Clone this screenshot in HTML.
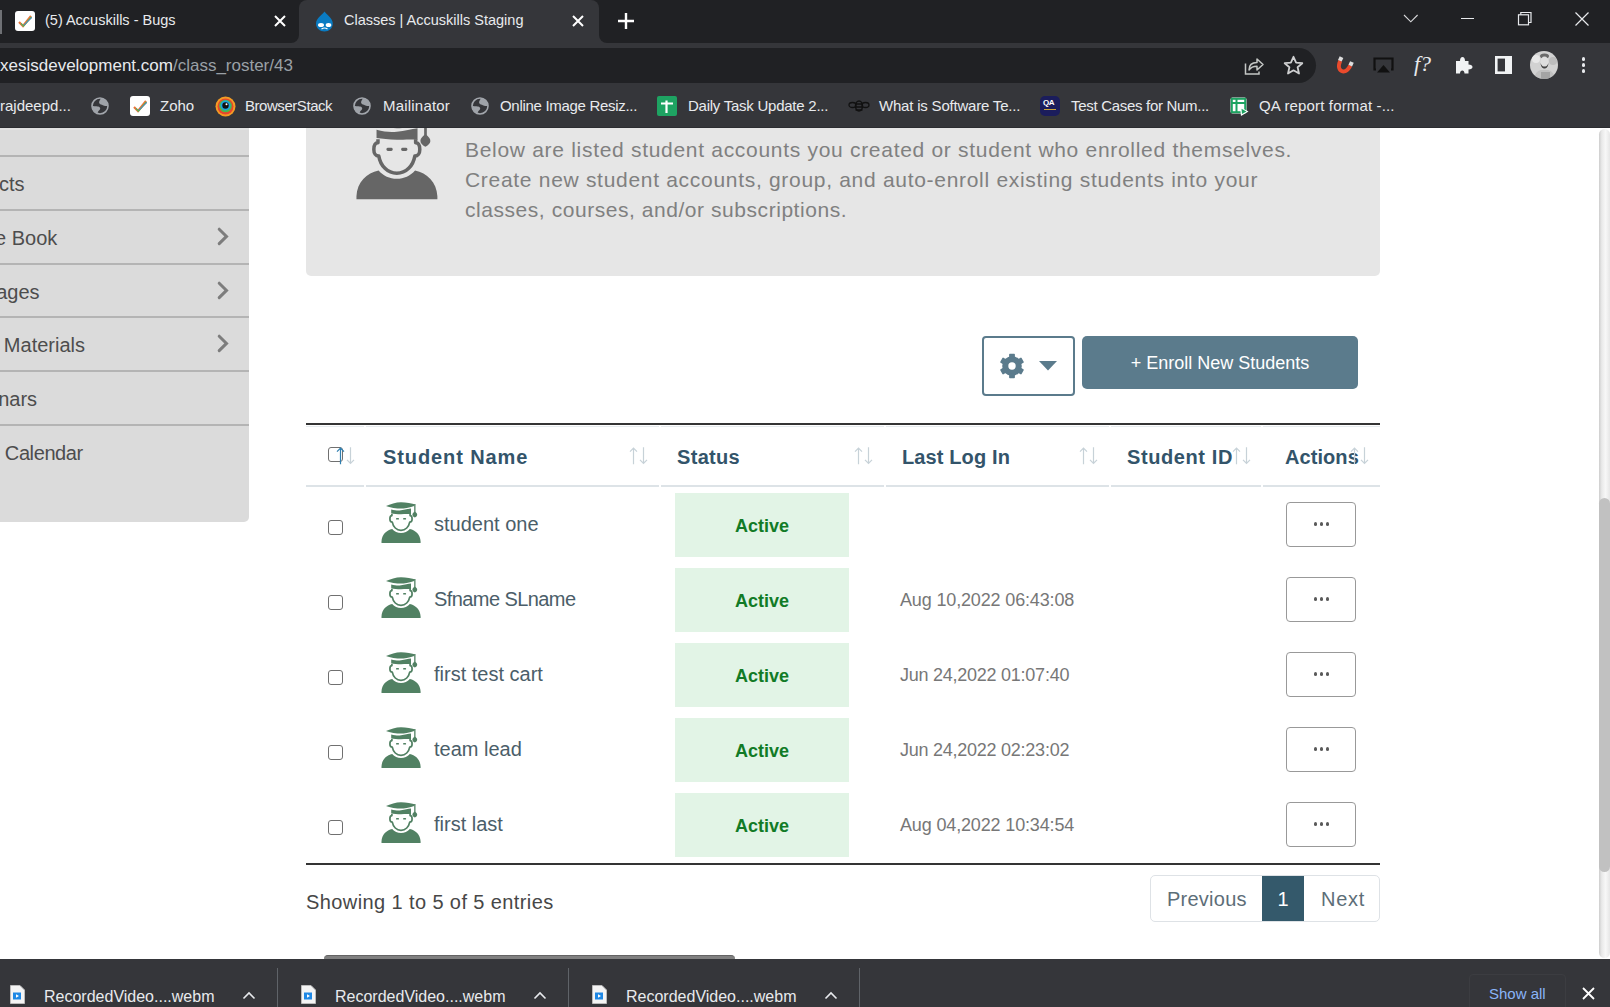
<!DOCTYPE html>
<html><head><meta charset="utf-8">
<style>
*{box-sizing:border-box;margin:0;padding:0}
html,body{width:1610px;height:1007px;overflow:hidden;background:#fff;font-family:"Liberation Sans",sans-serif}
.a{position:absolute}
.t{position:absolute;white-space:nowrap;line-height:1}
#strip{left:0;top:0;width:1610px;height:43px;background:#202124}
#toolbar{left:0;top:43px;width:1610px;height:85px;background:#35363a}
#acttab{left:299px;top:0;width:300px;height:43px;background:#35363a;border-radius:8px 8px 0 0}
#flareL{left:291px;top:35px;width:8px;height:8px;background:#35363a}
#flareL:after{content:"";position:absolute;left:0;top:0;width:8px;height:8px;background:#202124;border-radius:0 0 8px 0}
#flareR{left:599px;top:35px;width:8px;height:8px;background:#35363a}
#flareR:after{content:"";position:absolute;left:0;top:0;width:8px;height:8px;background:#202124;border-radius:0 0 0 8px}
#omni{left:-20px;top:48px;width:1336px;height:35px;background:#202124;border-radius:18px}
.tabt{font-size:14.5px;color:#e8eaed;top:13px}
.bm{font-size:15px;color:#e8eaed;top:98px}
#page{left:0;top:128px;width:1610px;height:831px;background:#fff;overflow:hidden}
#dl{left:0;top:959px;width:1610px;height:48px;background:#35363a}
/* PAGECSS */
.side{font-size:20px;color:#4d4d4d}
.info{font-size:21px;color:#808080;letter-spacing:0.7px}
.th{font-size:20px;font-weight:bold;color:#33546a}
.nm{font-size:20px;color:#4b5e69}
.act{font-size:18px;font-weight:bold;color:#117b26}
.dt{font-size:18px;color:#777;letter-spacing:-0.15px}
.pg{font-size:20px;color:#5d6e78}
.cb{width:15px;height:15px;border:1.5px solid #707070;border-radius:3px;background:#fff}
.dlt{font-size:16px;color:#e8eaed;top:989px}
/* ENDPAGECSS */
</style></head><body>
<!-- PAGE START -->
<div class="a" style="left:0;top:128px;width:249px;height:394px;background:#dbdbdb;border-radius:0 0 5px 0"></div>
<div class="a" style="left:0;top:128px;width:249px;height:2px;background:#e2e2e2"></div>
<div class="a" style="left:0;top:155px;width:249px;height:2px;background:#b4b4b4"></div>
<div class="a" style="left:0;top:209px;width:249px;height:2px;background:#b4b4b4"></div>
<div class="a" style="left:0;top:263px;width:249px;height:2px;background:#b4b4b4"></div>
<div class="a" style="left:0;top:316px;width:249px;height:2px;background:#b4b4b4"></div>
<div class="a" style="left:0;top:370px;width:249px;height:2px;background:#b4b4b4"></div>
<div class="a" style="left:0;top:424px;width:249px;height:2px;background:#b4b4b4"></div>
<div class="t side" style="right:1585.4px;top:174px;letter-spacing:0px">cts</div>
<div class="t side" style="right:1552.7px;top:228px;letter-spacing:0px">e Book</div>
<div class="t side" style="right:1570.4px;top:282px;letter-spacing:0px">ages</div>
<div class="t side" style="right:1525px;top:335px;letter-spacing:0px">Materials</div>
<div class="t side" style="right:1572.9px;top:389px;letter-spacing:0px">nars</div>
<div class="t side" style="right:1527.2px;top:443px;letter-spacing:-0.4px">Calendar</div>
<svg class="a" style="left:216px;top:226.5px" width="14" height="20" viewBox="0 0 14 20"><path d="M3.2,2.2 L10.5,9.4 L3.2,16.6" fill="none" stroke="#7d7d7d" stroke-width="3" stroke-linecap="round" stroke-linejoin="miter"/></svg>
<svg class="a" style="left:216px;top:280.5px" width="14" height="20" viewBox="0 0 14 20"><path d="M3.2,2.2 L10.5,9.4 L3.2,16.6" fill="none" stroke="#7d7d7d" stroke-width="3" stroke-linecap="round" stroke-linejoin="miter"/></svg>
<svg class="a" style="left:216px;top:334px" width="14" height="20" viewBox="0 0 14 20"><path d="M3.2,2.2 L10.5,9.4 L3.2,16.6" fill="none" stroke="#7d7d7d" stroke-width="3" stroke-linecap="round" stroke-linejoin="miter"/></svg>
<div class="a" style="left:306px;top:100px;width:1074px;height:176px;background:#e6e6e6;border-radius:5px"></div>
<svg class="a" style="left:343.4px;top:100.3px;overflow:visible" width="113.85" height="113.85" viewBox="0 0 55 55"><g fill="#666666"><path d="M6.5,48 L6.5,46.5 C6.8,39.5 11.5,35.2 17.2,34 C19.5,36.6 22.5,38 26,38 C29.5,38 32.5,36.6 34.8,34 C40.5,35.2 45.3,39.5 45.6,46.5 L45.6,48Z"/><path d="M11,11 C15,9.2 21,7.2 26,7.2 C31,7.2 37,8.6 40.7,9.5 L38.5,11.2 C34,12.8 29,13.6 26,13.6 C22,13.6 14.5,12.6 11,11Z"/><path d="M16.2,14.4 C20,15.3 23,15.8 26,15.3 C30,14.8 33,14 36,13.6 L36,19.2 C32,18.9 29,19.2 26,19.2 C22,19.1 19,18.7 16.2,18.4Z"/><rect x="39.2" y="9.3" width="1.3" height="8.5"/><path d="M39.8,16.6 C41.2,17.6 42.2,18.6 42.2,19.8 C42.2,21 41,22 39.8,22.6 C38.6,22 37.4,21 37.4,19.8 C37.4,18.6 38.4,17.6 39.8,16.6Z"/><rect x="21" y="23.1" width="3" height="1.5" rx="0.7"/><rect x="28.1" y="23.1" width="3" height="1.5" rx="0.7"/></g><path d="M16.9,19 L16.9,20.6 C15.6,20.6 14.9,22 14.9,23.9 C14.9,25.8 15.8,27.1 17.3,27.1 C18.1,31.8 21.5,35.4 26,35.4 C30.5,35.4 33.9,31.8 34.7,27.1 C36.2,27.1 37.1,25.8 37.1,23.9 C37.1,22 36.4,20.6 35.1,20.6 L35.1,19" fill="none" stroke="#666666" stroke-width="1.7" stroke-linejoin="round"/></svg>
<div class="t info" style="left:465px;top:139px">Below are listed student accounts you created or student who enrolled themselves.</div>
<div class="t info" style="left:465px;top:169px">Create new student accounts, group, and auto-enroll existing students into your</div>
<div class="t info" style="left:465px;top:199px;letter-spacing:0.55px">classes, courses, and/or subscriptions.</div>
<div class="a" style="left:982px;top:336px;width:93px;height:60px;border:2px solid #5b7b8c;border-radius:4px"></div>
<svg class="a" style="left:998.8px;top:352.6px" width="26" height="26" viewBox="-13 -13 26 26"><g fill="#5b7b8c"><circle r="9.8"/><rect x="-2.9" y="-12.3" width="5.8" height="5" rx="0.8" transform="rotate(0)"/><rect x="-2.9" y="-12.3" width="5.8" height="5" rx="0.8" transform="rotate(60)"/><rect x="-2.9" y="-12.3" width="5.8" height="5" rx="0.8" transform="rotate(120)"/><rect x="-2.9" y="-12.3" width="5.8" height="5" rx="0.8" transform="rotate(180)"/><rect x="-2.9" y="-12.3" width="5.8" height="5" rx="0.8" transform="rotate(240)"/><rect x="-2.9" y="-12.3" width="5.8" height="5" rx="0.8" transform="rotate(300)"/></g><circle r="3.7" fill="#fff"/></svg>
<svg class="a" style="left:1039px;top:361px" width="18" height="10" viewBox="0 0 18 10"><path d="M0,0 H18 L9,9.5Z" fill="#5b7b8c"/></svg>
<div class="a" style="left:1082px;top:336px;width:276px;height:53px;background:#5b7b8c;border-radius:5px"></div>
<div class="t" style="left:1082px;top:354px;width:276px;text-align:center;font-size:18px;color:#fff">+ Enroll New Students</div>
<div class="a" style="left:306px;top:423px;width:1074px;height:2px;background:#343434"></div>
<div class="a" style="left:306px;top:426px;width:58px;height:1px;background:#e6ebee"></div>
<div class="a" style="left:306px;top:485px;width:58px;height:2px;background:#dde3e7"></div>
<div class="a" style="left:366px;top:426px;width:293px;height:1px;background:#e6ebee"></div>
<div class="a" style="left:366px;top:485px;width:293px;height:2px;background:#dde3e7"></div>
<div class="a" style="left:661px;top:426px;width:223px;height:1px;background:#e6ebee"></div>
<div class="a" style="left:661px;top:485px;width:223px;height:2px;background:#dde3e7"></div>
<div class="a" style="left:886px;top:426px;width:223px;height:1px;background:#e6ebee"></div>
<div class="a" style="left:886px;top:485px;width:223px;height:2px;background:#dde3e7"></div>
<div class="a" style="left:1111px;top:426px;width:150px;height:1px;background:#e6ebee"></div>
<div class="a" style="left:1111px;top:485px;width:150px;height:2px;background:#dde3e7"></div>
<div class="a" style="left:1263px;top:426px;width:117px;height:1px;background:#e6ebee"></div>
<div class="a" style="left:1263px;top:485px;width:117px;height:2px;background:#dde3e7"></div>
<div class="a cb" style="left:328px;top:447px"></div>
<div class="t th" style="left:383px;top:447px;letter-spacing:0.9px">Student Name</div>
<div class="t th" style="left:677px;top:447px;letter-spacing:0.32px">Status</div>
<div class="t th" style="left:902px;top:447px;letter-spacing:0.12px">Last Log In</div>
<div class="t th" style="left:1127px;top:447px;letter-spacing:0.6px">Student ID</div>
<div class="t th" style="left:1285px;top:447px;letter-spacing:0.07px">Actions</div>
<svg class="a" style="left:336.5px;top:446px;overflow:visible" width="19" height="19" viewBox="0 0 19 19"><path d="M3.5,18.2 V2.1 M0,5.6 L3.5,2.1 L7,5.6" fill="none" stroke="#2f7fb0" stroke-width="1.2"/><path d="M13.5,1.2 V17.3 M10,13.8 L13.5,17.3 L17,13.8" fill="none" stroke="#c7d2d8" stroke-width="1.2"/></svg>
<svg class="a" style="left:630px;top:446px;overflow:visible" width="19" height="19" viewBox="0 0 19 19"><path d="M3.5,18.2 V2.1 M0,5.6 L3.5,2.1 L7,5.6" fill="none" stroke="#c7d2d8" stroke-width="1.2"/><path d="M13.5,1.2 V17.3 M10,13.8 L13.5,17.3 L17,13.8" fill="none" stroke="#c7d2d8" stroke-width="1.2"/></svg>
<svg class="a" style="left:855px;top:446px;overflow:visible" width="19" height="19" viewBox="0 0 19 19"><path d="M3.5,18.2 V2.1 M0,5.6 L3.5,2.1 L7,5.6" fill="none" stroke="#c7d2d8" stroke-width="1.2"/><path d="M13.5,1.2 V17.3 M10,13.8 L13.5,17.3 L17,13.8" fill="none" stroke="#c7d2d8" stroke-width="1.2"/></svg>
<svg class="a" style="left:1080px;top:446px;overflow:visible" width="19" height="19" viewBox="0 0 19 19"><path d="M3.5,18.2 V2.1 M0,5.6 L3.5,2.1 L7,5.6" fill="none" stroke="#c7d2d8" stroke-width="1.2"/><path d="M13.5,1.2 V17.3 M10,13.8 L13.5,17.3 L17,13.8" fill="none" stroke="#c7d2d8" stroke-width="1.2"/></svg>
<svg class="a" style="left:1233px;top:446px;overflow:visible" width="19" height="19" viewBox="0 0 19 19"><path d="M3.5,18.2 V2.1 M0,5.6 L3.5,2.1 L7,5.6" fill="none" stroke="#c7d2d8" stroke-width="1.2"/><path d="M13.5,1.2 V17.3 M10,13.8 L13.5,17.3 L17,13.8" fill="none" stroke="#c7d2d8" stroke-width="1.2"/></svg>
<svg class="a" style="left:1350.5px;top:446px;overflow:visible" width="19" height="19" viewBox="0 0 19 19"><path d="M3.5,18.2 V2.1 M0,5.6 L3.5,2.1 L7,5.6" fill="none" stroke="#c7d2d8" stroke-width="1.2"/><path d="M13.5,1.2 V17.3 M10,13.8 L13.5,17.3 L17,13.8" fill="none" stroke="#c7d2d8" stroke-width="1.2"/></svg>
<div class="a cb" style="left:328px;top:520px"></div>
<svg class="a" style="left:375px;top:495px;overflow:visible" width="55" height="55" viewBox="0 0 55 55"><g fill="#518163"><path d="M6.5,48 L6.5,46.5 C6.8,39.5 11.5,35.2 17.2,34 C19.5,36.6 22.5,38 26,38 C29.5,38 32.5,36.6 34.8,34 C40.5,35.2 45.3,39.5 45.6,46.5 L45.6,48Z"/><path d="M11,11 C15,9.2 21,7.2 26,7.2 C31,7.2 37,8.6 40.7,9.5 L38.5,11.2 C34,12.8 29,13.6 26,13.6 C22,13.6 14.5,12.6 11,11Z"/><path d="M16.2,14.4 C20,15.3 23,15.8 26,15.3 C30,14.8 33,14 36,13.6 L36,19.2 C32,18.9 29,19.2 26,19.2 C22,19.1 19,18.7 16.2,18.4Z"/><rect x="39.2" y="9.3" width="1.3" height="8.5"/><path d="M39.8,16.6 C41.2,17.6 42.2,18.6 42.2,19.8 C42.2,21 41,22 39.8,22.6 C38.6,22 37.4,21 37.4,19.8 C37.4,18.6 38.4,17.6 39.8,16.6Z"/><rect x="21" y="23.1" width="3" height="1.5" rx="0.7"/><rect x="28.1" y="23.1" width="3" height="1.5" rx="0.7"/></g><path d="M16.9,19 L16.9,20.6 C15.6,20.6 14.9,22 14.9,23.9 C14.9,25.8 15.8,27.1 17.3,27.1 C18.1,31.8 21.5,35.4 26,35.4 C30.5,35.4 33.9,31.8 34.7,27.1 C36.2,27.1 37.1,25.8 37.1,23.9 C37.1,22 36.4,20.6 35.1,20.6 L35.1,19" fill="none" stroke="#518163" stroke-width="1.7" stroke-linejoin="round"/></svg>
<div class="t nm" style="left:434px;top:514px;letter-spacing:0px">student one</div>
<div class="a" style="left:675px;top:493px;width:174px;height:64px;background:#e2f4e6"></div>
<div class="t act" style="left:675px;top:517px;width:174px;text-align:center">Active</div>
<div class="a" style="left:1286px;top:502px;width:70px;height:45px;border:1px solid #999;border-radius:4px"></div>
<div class="a" style="left:1313.9px;top:522.3px;width:3.6px;height:3.6px;border-radius:50%;background:#5a5a5a"></div>
<div class="a" style="left:1319.8000000000002px;top:522.3px;width:3.6px;height:3.6px;border-radius:50%;background:#5a5a5a"></div>
<div class="a" style="left:1325.7px;top:522.3px;width:3.6px;height:3.6px;border-radius:50%;background:#5a5a5a"></div>
<div class="a cb" style="left:328px;top:595px"></div>
<svg class="a" style="left:375px;top:570px;overflow:visible" width="55" height="55" viewBox="0 0 55 55"><g fill="#518163"><path d="M6.5,48 L6.5,46.5 C6.8,39.5 11.5,35.2 17.2,34 C19.5,36.6 22.5,38 26,38 C29.5,38 32.5,36.6 34.8,34 C40.5,35.2 45.3,39.5 45.6,46.5 L45.6,48Z"/><path d="M11,11 C15,9.2 21,7.2 26,7.2 C31,7.2 37,8.6 40.7,9.5 L38.5,11.2 C34,12.8 29,13.6 26,13.6 C22,13.6 14.5,12.6 11,11Z"/><path d="M16.2,14.4 C20,15.3 23,15.8 26,15.3 C30,14.8 33,14 36,13.6 L36,19.2 C32,18.9 29,19.2 26,19.2 C22,19.1 19,18.7 16.2,18.4Z"/><rect x="39.2" y="9.3" width="1.3" height="8.5"/><path d="M39.8,16.6 C41.2,17.6 42.2,18.6 42.2,19.8 C42.2,21 41,22 39.8,22.6 C38.6,22 37.4,21 37.4,19.8 C37.4,18.6 38.4,17.6 39.8,16.6Z"/><rect x="21" y="23.1" width="3" height="1.5" rx="0.7"/><rect x="28.1" y="23.1" width="3" height="1.5" rx="0.7"/></g><path d="M16.9,19 L16.9,20.6 C15.6,20.6 14.9,22 14.9,23.9 C14.9,25.8 15.8,27.1 17.3,27.1 C18.1,31.8 21.5,35.4 26,35.4 C30.5,35.4 33.9,31.8 34.7,27.1 C36.2,27.1 37.1,25.8 37.1,23.9 C37.1,22 36.4,20.6 35.1,20.6 L35.1,19" fill="none" stroke="#518163" stroke-width="1.7" stroke-linejoin="round"/></svg>
<div class="t nm" style="left:434px;top:589px;letter-spacing:-0.58px">Sfname SLname</div>
<div class="a" style="left:675px;top:568px;width:174px;height:64px;background:#e2f4e6"></div>
<div class="t act" style="left:675px;top:592px;width:174px;text-align:center">Active</div>
<div class="t dt" style="left:900px;top:591px;letter-spacing:-0.15px">Aug 10,2022 06:43:08</div>
<div class="a" style="left:1286px;top:577px;width:70px;height:45px;border:1px solid #999;border-radius:4px"></div>
<div class="a" style="left:1313.9px;top:597.3px;width:3.6px;height:3.6px;border-radius:50%;background:#5a5a5a"></div>
<div class="a" style="left:1319.8000000000002px;top:597.3px;width:3.6px;height:3.6px;border-radius:50%;background:#5a5a5a"></div>
<div class="a" style="left:1325.7px;top:597.3px;width:3.6px;height:3.6px;border-radius:50%;background:#5a5a5a"></div>
<div class="a cb" style="left:328px;top:670px"></div>
<svg class="a" style="left:375px;top:645px;overflow:visible" width="55" height="55" viewBox="0 0 55 55"><g fill="#518163"><path d="M6.5,48 L6.5,46.5 C6.8,39.5 11.5,35.2 17.2,34 C19.5,36.6 22.5,38 26,38 C29.5,38 32.5,36.6 34.8,34 C40.5,35.2 45.3,39.5 45.6,46.5 L45.6,48Z"/><path d="M11,11 C15,9.2 21,7.2 26,7.2 C31,7.2 37,8.6 40.7,9.5 L38.5,11.2 C34,12.8 29,13.6 26,13.6 C22,13.6 14.5,12.6 11,11Z"/><path d="M16.2,14.4 C20,15.3 23,15.8 26,15.3 C30,14.8 33,14 36,13.6 L36,19.2 C32,18.9 29,19.2 26,19.2 C22,19.1 19,18.7 16.2,18.4Z"/><rect x="39.2" y="9.3" width="1.3" height="8.5"/><path d="M39.8,16.6 C41.2,17.6 42.2,18.6 42.2,19.8 C42.2,21 41,22 39.8,22.6 C38.6,22 37.4,21 37.4,19.8 C37.4,18.6 38.4,17.6 39.8,16.6Z"/><rect x="21" y="23.1" width="3" height="1.5" rx="0.7"/><rect x="28.1" y="23.1" width="3" height="1.5" rx="0.7"/></g><path d="M16.9,19 L16.9,20.6 C15.6,20.6 14.9,22 14.9,23.9 C14.9,25.8 15.8,27.1 17.3,27.1 C18.1,31.8 21.5,35.4 26,35.4 C30.5,35.4 33.9,31.8 34.7,27.1 C36.2,27.1 37.1,25.8 37.1,23.9 C37.1,22 36.4,20.6 35.1,20.6 L35.1,19" fill="none" stroke="#518163" stroke-width="1.7" stroke-linejoin="round"/></svg>
<div class="t nm" style="left:434px;top:664px;letter-spacing:0px">first test cart</div>
<div class="a" style="left:675px;top:643px;width:174px;height:64px;background:#e2f4e6"></div>
<div class="t act" style="left:675px;top:667px;width:174px;text-align:center">Active</div>
<div class="t dt" style="left:900px;top:666px;letter-spacing:-0.25px">Jun 24,2022 01:07:40</div>
<div class="a" style="left:1286px;top:652px;width:70px;height:45px;border:1px solid #999;border-radius:4px"></div>
<div class="a" style="left:1313.9px;top:672.3px;width:3.6px;height:3.6px;border-radius:50%;background:#5a5a5a"></div>
<div class="a" style="left:1319.8000000000002px;top:672.3px;width:3.6px;height:3.6px;border-radius:50%;background:#5a5a5a"></div>
<div class="a" style="left:1325.7px;top:672.3px;width:3.6px;height:3.6px;border-radius:50%;background:#5a5a5a"></div>
<div class="a cb" style="left:328px;top:745px"></div>
<svg class="a" style="left:375px;top:720px;overflow:visible" width="55" height="55" viewBox="0 0 55 55"><g fill="#518163"><path d="M6.5,48 L6.5,46.5 C6.8,39.5 11.5,35.2 17.2,34 C19.5,36.6 22.5,38 26,38 C29.5,38 32.5,36.6 34.8,34 C40.5,35.2 45.3,39.5 45.6,46.5 L45.6,48Z"/><path d="M11,11 C15,9.2 21,7.2 26,7.2 C31,7.2 37,8.6 40.7,9.5 L38.5,11.2 C34,12.8 29,13.6 26,13.6 C22,13.6 14.5,12.6 11,11Z"/><path d="M16.2,14.4 C20,15.3 23,15.8 26,15.3 C30,14.8 33,14 36,13.6 L36,19.2 C32,18.9 29,19.2 26,19.2 C22,19.1 19,18.7 16.2,18.4Z"/><rect x="39.2" y="9.3" width="1.3" height="8.5"/><path d="M39.8,16.6 C41.2,17.6 42.2,18.6 42.2,19.8 C42.2,21 41,22 39.8,22.6 C38.6,22 37.4,21 37.4,19.8 C37.4,18.6 38.4,17.6 39.8,16.6Z"/><rect x="21" y="23.1" width="3" height="1.5" rx="0.7"/><rect x="28.1" y="23.1" width="3" height="1.5" rx="0.7"/></g><path d="M16.9,19 L16.9,20.6 C15.6,20.6 14.9,22 14.9,23.9 C14.9,25.8 15.8,27.1 17.3,27.1 C18.1,31.8 21.5,35.4 26,35.4 C30.5,35.4 33.9,31.8 34.7,27.1 C36.2,27.1 37.1,25.8 37.1,23.9 C37.1,22 36.4,20.6 35.1,20.6 L35.1,19" fill="none" stroke="#518163" stroke-width="1.7" stroke-linejoin="round"/></svg>
<div class="t nm" style="left:434px;top:739px;letter-spacing:0px">team lead</div>
<div class="a" style="left:675px;top:718px;width:174px;height:64px;background:#e2f4e6"></div>
<div class="t act" style="left:675px;top:742px;width:174px;text-align:center">Active</div>
<div class="t dt" style="left:900px;top:741px;letter-spacing:-0.25px">Jun 24,2022 02:23:02</div>
<div class="a" style="left:1286px;top:727px;width:70px;height:45px;border:1px solid #999;border-radius:4px"></div>
<div class="a" style="left:1313.9px;top:747.3px;width:3.6px;height:3.6px;border-radius:50%;background:#5a5a5a"></div>
<div class="a" style="left:1319.8000000000002px;top:747.3px;width:3.6px;height:3.6px;border-radius:50%;background:#5a5a5a"></div>
<div class="a" style="left:1325.7px;top:747.3px;width:3.6px;height:3.6px;border-radius:50%;background:#5a5a5a"></div>
<div class="a cb" style="left:328px;top:820px"></div>
<svg class="a" style="left:375px;top:795px;overflow:visible" width="55" height="55" viewBox="0 0 55 55"><g fill="#518163"><path d="M6.5,48 L6.5,46.5 C6.8,39.5 11.5,35.2 17.2,34 C19.5,36.6 22.5,38 26,38 C29.5,38 32.5,36.6 34.8,34 C40.5,35.2 45.3,39.5 45.6,46.5 L45.6,48Z"/><path d="M11,11 C15,9.2 21,7.2 26,7.2 C31,7.2 37,8.6 40.7,9.5 L38.5,11.2 C34,12.8 29,13.6 26,13.6 C22,13.6 14.5,12.6 11,11Z"/><path d="M16.2,14.4 C20,15.3 23,15.8 26,15.3 C30,14.8 33,14 36,13.6 L36,19.2 C32,18.9 29,19.2 26,19.2 C22,19.1 19,18.7 16.2,18.4Z"/><rect x="39.2" y="9.3" width="1.3" height="8.5"/><path d="M39.8,16.6 C41.2,17.6 42.2,18.6 42.2,19.8 C42.2,21 41,22 39.8,22.6 C38.6,22 37.4,21 37.4,19.8 C37.4,18.6 38.4,17.6 39.8,16.6Z"/><rect x="21" y="23.1" width="3" height="1.5" rx="0.7"/><rect x="28.1" y="23.1" width="3" height="1.5" rx="0.7"/></g><path d="M16.9,19 L16.9,20.6 C15.6,20.6 14.9,22 14.9,23.9 C14.9,25.8 15.8,27.1 17.3,27.1 C18.1,31.8 21.5,35.4 26,35.4 C30.5,35.4 33.9,31.8 34.7,27.1 C36.2,27.1 37.1,25.8 37.1,23.9 C37.1,22 36.4,20.6 35.1,20.6 L35.1,19" fill="none" stroke="#518163" stroke-width="1.7" stroke-linejoin="round"/></svg>
<div class="t nm" style="left:434px;top:814px;letter-spacing:0px">first last</div>
<div class="a" style="left:675px;top:793px;width:174px;height:64px;background:#e2f4e6"></div>
<div class="t act" style="left:675px;top:817px;width:174px;text-align:center">Active</div>
<div class="t dt" style="left:900px;top:816px;letter-spacing:-0.15px">Aug 04,2022 10:34:54</div>
<div class="a" style="left:1286px;top:802px;width:70px;height:45px;border:1px solid #999;border-radius:4px"></div>
<div class="a" style="left:1313.9px;top:822.3px;width:3.6px;height:3.6px;border-radius:50%;background:#5a5a5a"></div>
<div class="a" style="left:1319.8000000000002px;top:822.3px;width:3.6px;height:3.6px;border-radius:50%;background:#5a5a5a"></div>
<div class="a" style="left:1325.7px;top:822.3px;width:3.6px;height:3.6px;border-radius:50%;background:#5a5a5a"></div>
<div class="a" style="left:306px;top:863px;width:1074px;height:2px;background:#343434"></div>
<div class="t" style="left:306px;top:892px;font-size:20px;color:#474747;letter-spacing:0.4px">Showing 1 to 5 of 5 entries</div>
<div class="a" style="left:1150px;top:875px;width:230px;height:47px;border:1px solid #dee2e6;border-radius:5px"></div>
<div class="a" style="left:1262px;top:876px;width:42px;height:45px;background:#34596b"></div>
<div class="t pg" style="left:1167px;top:889px;letter-spacing:0.25px">Previous</div>
<div class="t pg" style="left:1262px;top:889px;width:42px;text-align:center;color:#fff">1</div>
<div class="t pg" style="left:1321px;top:889px;letter-spacing:0.7px">Next</div>
<div class="a" style="left:1599px;top:129px;width:11px;height:829px;border-radius:6px;background:linear-gradient(90deg,#cdcdcd 0,#e9e9e9 25%,#f7f7f7 60%,#e6e6e6 100%)"></div>
<div class="a" style="left:1599px;top:498px;width:11px;height:374px;border-radius:6px;background:#c1c1c1"></div>
<div class="a" style="left:324px;top:955px;width:411px;height:8px;border-radius:4px;background:#808080;border-top:1px solid #646464"></div>
<div class="a" style="left:0;top:959px;width:1610px;height:48px;background:#35363a"></div>
<svg class="a" style="left:10px;top:985px" width="15" height="19" viewBox="0 0 15 19"><path d="M0.5,0.5 H10 L14.5,5 V18.5 H0.5Z" fill="#f4f4f4" stroke="#bbb" stroke-width="1"/><rect x="3" y="7.5" width="8" height="7" fill="#1e88e5"/><path d="M6,9.3 L9,11 L6,12.7Z" fill="#fff"/></svg>
<div class="t dlt" style="left:44px">RecordedVideo....webm</div>
<svg class="a" style="left:242px;top:990px" width="14" height="10" viewBox="0 0 14 10"><path d="M1.5,8.5 L7,3 L12.5,8.5" fill="none" stroke="#e8eaed" stroke-width="1.6"/></svg>
<div class="a" style="left:277px;top:968px;width:1px;height:39px;background:#5f6368"></div>
<svg class="a" style="left:301px;top:985px" width="15" height="19" viewBox="0 0 15 19"><path d="M0.5,0.5 H10 L14.5,5 V18.5 H0.5Z" fill="#f4f4f4" stroke="#bbb" stroke-width="1"/><rect x="3" y="7.5" width="8" height="7" fill="#1e88e5"/><path d="M6,9.3 L9,11 L6,12.7Z" fill="#fff"/></svg>
<div class="t dlt" style="left:335px">RecordedVideo....webm</div>
<svg class="a" style="left:533px;top:990px" width="14" height="10" viewBox="0 0 14 10"><path d="M1.5,8.5 L7,3 L12.5,8.5" fill="none" stroke="#e8eaed" stroke-width="1.6"/></svg>
<div class="a" style="left:568px;top:968px;width:1px;height:39px;background:#5f6368"></div>
<svg class="a" style="left:592px;top:985px" width="15" height="19" viewBox="0 0 15 19"><path d="M0.5,0.5 H10 L14.5,5 V18.5 H0.5Z" fill="#f4f4f4" stroke="#bbb" stroke-width="1"/><rect x="3" y="7.5" width="8" height="7" fill="#1e88e5"/><path d="M6,9.3 L9,11 L6,12.7Z" fill="#fff"/></svg>
<div class="t dlt" style="left:626px">RecordedVideo....webm</div>
<svg class="a" style="left:824px;top:990px" width="14" height="10" viewBox="0 0 14 10"><path d="M1.5,8.5 L7,3 L12.5,8.5" fill="none" stroke="#e8eaed" stroke-width="1.6"/></svg>
<div class="a" style="left:859px;top:968px;width:1px;height:39px;background:#5f6368"></div>
<div class="a" style="left:1469px;top:974px;width:97px;height:40px;border:1px solid #3c3d41;border-radius:4px"></div>
<div class="t" style="left:1489px;top:986px;font-size:15px;color:#8ab4f8">Show all</div>
<svg class="a" style="left:1582px;top:987px" width="13" height="13" viewBox="0 0 13 13"><path d="M1,1 L12,12 M12,1 L1,12" stroke="#fff" stroke-width="1.8"/></svg>
<!-- PAGE END -->
<div id="strip" class="a"></div>
<div id="toolbar" class="a"></div>
<div id="acttab" class="a"></div>
<div id="flareL" class="a"></div>
<div id="flareR" class="a"></div>
<!-- tab separator -->
<div class="a" style="left:0;top:10px;width:2px;height:24px;background:#6f7175"></div>
<!-- inactive tab favicon -->
<div class="a" style="left:15px;top:11px;width:20px;height:20px;background:#fff;border-radius:3px"></div>
<svg class="a" style="left:15px;top:11px" width="20" height="20" viewBox="0 0 20 20"><path d="M4,11 L8,15 L16,5" fill="none" stroke="#e8763a" stroke-width="2.2"/><path d="M6,12.5 L8.5,15 L16.5,6" fill="none" stroke="#5cae5c" stroke-width="1.4"/><path d="M9,14 L17,6.5" fill="none" stroke="#4a7fd6" stroke-width="1"/></svg>
<div class="t tabt" style="left:45px">(5) Accuskills - Bugs</div>
<svg class="a" style="left:274px;top:15px" width="12" height="12" viewBox="0 0 12 12"><path d="M1,1 L11,11 M11,1 L1,11" stroke="#fff" stroke-width="2"/></svg>
<!-- active tab -->
<svg class="a" style="left:315px;top:11px" width="19" height="21" viewBox="0 0 19 21"><path d="M9.5,0.5 C11,3 17.8,7 17.8,12.5 C17.8,17.3 14,20.5 9.5,20.5 C5,20.5 1,17.3 1,12.5 C1,7 8,3 9.5,0.5Z" fill="#0a7bc2"/><ellipse cx="6" cy="14" rx="3" ry="2" fill="#fff"/><ellipse cx="13.5" cy="14" rx="2.8" ry="2" fill="#fff"/><path d="M6.5,18 Q9.5,16 12.5,18" stroke="#fff" stroke-width="1.2" fill="none"/></svg>
<div class="t tabt" style="left:344px">Classes | Accuskills Staging</div>
<svg class="a" style="left:572px;top:15px" width="12" height="12" viewBox="0 0 12 12"><path d="M1,1 L11,11 M11,1 L1,11" stroke="#fff" stroke-width="2"/></svg>
<svg class="a" style="left:617px;top:12px" width="18" height="18" viewBox="0 0 18 18"><path d="M9,1 V17 M1,9 H17" stroke="#fff" stroke-width="2.4"/></svg>
<!-- window controls -->
<svg class="a" style="left:1402px;top:13px" width="18" height="12" viewBox="0 0 18 12"><path d="M2,2 L8.8,8.8 L15.6,2" stroke="#d8d9db" stroke-width="1.1" fill="none"/></svg>
<div class="a" style="left:1461px;top:18px;width:13px;height:1.2px;background:#e8eaed"></div>
<svg class="a" style="left:1516px;top:10px" width="18" height="18" viewBox="0 0 18 18"><rect x="2.5" y="4.8" width="10" height="10" fill="none" stroke="#e8eaed" stroke-width="1.2"/><path d="M4.8,4.8 V2.5 H15 V12.5 H12.5" fill="none" stroke="#e8eaed" stroke-width="1.2"/></svg>
<svg class="a" style="left:1574px;top:11px" width="16" height="16" viewBox="0 0 16 16"><path d="M1.5,1.5 L14.5,14.5 M14.5,1.5 L1.5,14.5" stroke="#e8eaed" stroke-width="1.2"/></svg>
<div id="omni" class="a"></div>
<div class="a" style="left:0;top:127px;width:1610px;height:1px;background:#2c2d31"></div>
<div class="t" style="left:0;top:57px;font-size:17px;color:#e8eaed">xesisdevelopment.com<span style="color:#9aa0a6">/class_roster/43</span></div>
<!-- omnibox icons -->
<svg class="a" style="left:1243px;top:55px" width="22" height="22" viewBox="0 0 22 22"><path d="M2.5,8.5 V19 H16 V16.5" fill="none" stroke="#c4c7c5" stroke-width="1.5"/><path d="M6,15 C6,9.5 9.5,7.5 14,7.5 V4 L20,9.5 L14,15 V11.2 C10.5,11.2 8,12 6,15Z" fill="none" stroke="#c4c7c5" stroke-width="1.5" stroke-linejoin="round"/></svg>
<svg class="a" style="left:1283px;top:55px" width="21" height="21" viewBox="0 0 21 21"><path d="M10.5,1.8 L13.1,7.6 L19.3,8.2 L14.6,12.3 L16,18.5 L10.5,15.3 L5,18.5 L6.4,12.3 L1.7,8.2 L7.9,7.6Z" fill="none" stroke="#cfd0d1" stroke-width="1.8" stroke-linejoin="round"/></svg>
<!-- extensions -->
<svg class="a" style="left:1334px;top:56px" width="20" height="20" viewBox="0 0 20 20"><path d="M2.5,7 C2.5,14 6,17.5 10,17.5 C14,17.5 17.5,14 17.5,7 L13.5,7 C13.5,11.5 12,13.5 10,13.5 C8,13.5 6.5,11.5 6.5,7Z" fill="#ea4a2c" transform="rotate(25 10 10)"/><rect x="2" y="3" width="4" height="4" fill="#ddd" transform="rotate(25 10 10)"/><rect x="13.5" y="3" width="4" height="4" fill="#ddd" transform="rotate(25 10 10)"/></svg>
<svg class="a" style="left:1373px;top:56px" width="21" height="20" viewBox="0 0 21 20"><path d="M3,13.5 H1.5 V2.5 H19.5 V13.5 H18" fill="none" stroke="#111" stroke-width="2.2"/><path d="M10.5,9 L17,16.5 H4Z" fill="#111"/></svg>
<div class="t" style="left:1414px;top:53px;font-family:'Liberation Serif',serif;font-style:italic;font-size:22px;color:#e8eaed">f?</div>
<svg class="a" style="left:1453px;top:55px" width="21" height="21" viewBox="0 0 21 21"><path d="M3,6 H7 C7,3.5 8,2 9.5,2 C11,2 12,3.5 12,6 H15.5 V9.5 C18,9.5 19.5,10.5 19.5,12 C19.5,13.5 18,14.5 15.5,14.5 V18.5 H11.5 C11.5,16.5 10.5,15.5 9.3,15.5 C8,15.5 7,16.5 7,18.5 H3Z" fill="#f1f3f4"/></svg>
<svg class="a" style="left:1493px;top:55px" width="20" height="20" viewBox="0 0 20 20"><rect x="2" y="1" width="17" height="18" fill="#f1f3f4"/><rect x="4.6" y="3.6" width="7.4" height="12.8" fill="#35363a"/></svg>
<svg class="a" style="left:1530px;top:51px" width="28" height="28" viewBox="0 0 28 28"><defs><clipPath id="avc"><circle cx="14" cy="14" r="14"/></clipPath></defs><g clip-path="url(#avc)"><rect width="28" height="28" fill="#d2d2d2"/><circle cx="6" cy="8" r="4" fill="#e8e8e8"/><circle cx="23" cy="10" r="4" fill="#bdbdbd"/><ellipse cx="14.5" cy="5" rx="4.5" ry="2.5" fill="#6a6a6a"/><ellipse cx="14.5" cy="10.5" rx="4" ry="5" fill="#dedede"/><path d="M10.5,12 C11,16.5 13,17.5 14.5,17.5 C16,17.5 18,16.5 18.5,12 C17.5,15 16,15.5 14.5,15.5 C13,15.5 11.5,15 10.5,12Z" fill="#444"/><rect x="11" y="21" width="9" height="8" fill="#8a8a8a"/><path d="M4,28 C5,21 9,19 12,19 L17,19 C20,19 24,21 25,28Z" fill="#b5b5b5" opacity="0.6"/></g></svg>
<div class="a" style="left:1581.6px;top:57px;width:3.8px;height:3.8px;border-radius:50%;background:#e8eaed"></div>
<div class="a" style="left:1581.6px;top:63.1px;width:3.8px;height:3.8px;border-radius:50%;background:#e8eaed"></div>
<div class="a" style="left:1581.6px;top:69.3px;width:3.8px;height:3.8px;border-radius:50%;background:#e8eaed"></div>
<!-- bookmarks -->
<div class="t bm" style="left:0">rajdeepd...</div>
<svg class="a" style="left:91px;top:97px" width="18" height="18" viewBox="0 0 18 18"><circle cx="9" cy="9" r="8" fill="none" stroke="#a3a7ad" stroke-width="1.6"/><path d="M10,1.2 C9,3 7.6,4.5 8.2,6 C8.8,7.5 11,7.5 11.8,8.2 C12.8,9 14.5,9 17,8.9 A8,8 0 0 0 10,1.2Z" fill="#9fa3a9"/><path d="M1,8.7 C4,9.5 7.5,9 8.4,10 C9.4,11 9.6,12 8.5,13 C7.3,14 6.8,15 6.5,16.6 A8,8 0 0 1 1,8.7Z" fill="#9fa3a9"/></svg>
<div class="a" style="left:130px;top:96px;width:20px;height:20px;background:#fff;border-radius:3px"></div>
<svg class="a" style="left:130px;top:96px" width="20" height="20" viewBox="0 0 20 20"><path d="M4,11 L8,15 L16,5" fill="none" stroke="#e8763a" stroke-width="2.2"/><path d="M6,12.5 L8.5,15 L16.5,6" fill="none" stroke="#5cae5c" stroke-width="1.4"/><path d="M9,14 L17,6.5" fill="none" stroke="#4a7fd6" stroke-width="1"/></svg>
<div class="t bm" style="left:160px">Zoho</div>
<svg class="a" style="left:215px;top:96px" width="21" height="21" viewBox="0 0 21 21"><circle cx="10.5" cy="10.5" r="10" fill="#f39c24"/><circle cx="10.5" cy="10.5" r="8" fill="#e8452c"/><circle cx="10.5" cy="10" r="6.3" fill="#4cb848"/><circle cx="10.5" cy="9.5" r="5" fill="#1aa3dc"/><circle cx="10.5" cy="9.5" r="3.2" fill="#111"/><circle cx="11.5" cy="8.3" r="1" fill="#fff"/></svg>
<div class="t bm" style="left:245px;letter-spacing:-0.45px">BrowserStack</div>
<svg class="a" style="left:353px;top:97px" width="18" height="18" viewBox="0 0 18 18"><circle cx="9" cy="9" r="8" fill="none" stroke="#a3a7ad" stroke-width="1.6"/><path d="M10,1.2 C9,3 7.6,4.5 8.2,6 C8.8,7.5 11,7.5 11.8,8.2 C12.8,9 14.5,9 17,8.9 A8,8 0 0 0 10,1.2Z" fill="#9fa3a9"/><path d="M1,8.7 C4,9.5 7.5,9 8.4,10 C9.4,11 9.6,12 8.5,13 C7.3,14 6.8,15 6.5,16.6 A8,8 0 0 1 1,8.7Z" fill="#9fa3a9"/></svg>
<div class="t bm" style="left:383px;letter-spacing:0.2px">Mailinator</div>
<svg class="a" style="left:471px;top:97px" width="18" height="18" viewBox="0 0 18 18"><circle cx="9" cy="9" r="8" fill="none" stroke="#a3a7ad" stroke-width="1.6"/><path d="M10,1.2 C9,3 7.6,4.5 8.2,6 C8.8,7.5 11,7.5 11.8,8.2 C12.8,9 14.5,9 17,8.9 A8,8 0 0 0 10,1.2Z" fill="#9fa3a9"/><path d="M1,8.7 C4,9.5 7.5,9 8.4,10 C9.4,11 9.6,12 8.5,13 C7.3,14 6.8,15 6.5,16.6 A8,8 0 0 1 1,8.7Z" fill="#9fa3a9"/></svg>
<div class="t bm" style="left:500px;letter-spacing:-0.3px">Online Image Resiz...</div>
<div class="a" style="left:657px;top:96px;width:20px;height:20px;background:#1ea362;border-radius:2px"></div>
<svg class="a" style="left:657px;top:96px" width="20" height="20" viewBox="0 0 20 20"><path d="M4,7.5 H16 M9.5,4.5 V17" stroke="#fff" stroke-width="2.2"/></svg>
<div class="t bm" style="left:688px;letter-spacing:-0.25px">Daily Task Update 2...</div>
<svg class="a" style="left:848px;top:97px" width="22" height="18" viewBox="0 0 22 18"><ellipse cx="11" cy="9" rx="3.5" ry="5" fill="none" stroke="#111" stroke-width="1.5"/><path d="M7.5,7 H14.5 M7.5,10 H14.5 M7.5,13 H14.5" stroke="#111" stroke-width="1.3"/><ellipse cx="4.5" cy="8" rx="3.5" ry="2.5" fill="none" stroke="#111" stroke-width="1.3"/><ellipse cx="17.5" cy="8" rx="3.5" ry="2.5" fill="none" stroke="#111" stroke-width="1.3"/></svg>
<div class="t bm" style="left:879px;letter-spacing:-0.2px">What is Software Te...</div>
<div class="a" style="left:1040px;top:96px;width:20px;height:20px;background:#1b1d5c;border-radius:5px"></div>
<div class="t" style="left:1043px;top:99px;font-size:8px;font-weight:bold;color:#fff;letter-spacing:-0.5px">QA</div>
<div class="a" style="left:1044px;top:109px;width:12px;height:1px;background:#c9a33a"></div>
<div class="t bm" style="left:1071px;letter-spacing:-0.3px">Test Cases for Num...</div>
<svg class="a" style="left:1229px;top:96px" width="21" height="21" viewBox="0 0 21 21"><rect x="1.5" y="1.5" width="16" height="16" rx="2" fill="#fff"/><rect x="2.8" y="2.8" width="13.4" height="13.4" fill="none" stroke="#1ea362" stroke-width="2"/><path d="M3,7 H16 M7.5,3 V16" stroke="#1ea362" stroke-width="2"/><path d="M11,11 L19.5,15.5 L12,20Z" fill="#fff"/><path d="M12.5,12.8 L17.5,15.5 L13,18Z" fill="#1ea362"/></svg>
<div class="t bm" style="left:1259px;letter-spacing:0.15px">QA report format -...</div>
</body></html>
